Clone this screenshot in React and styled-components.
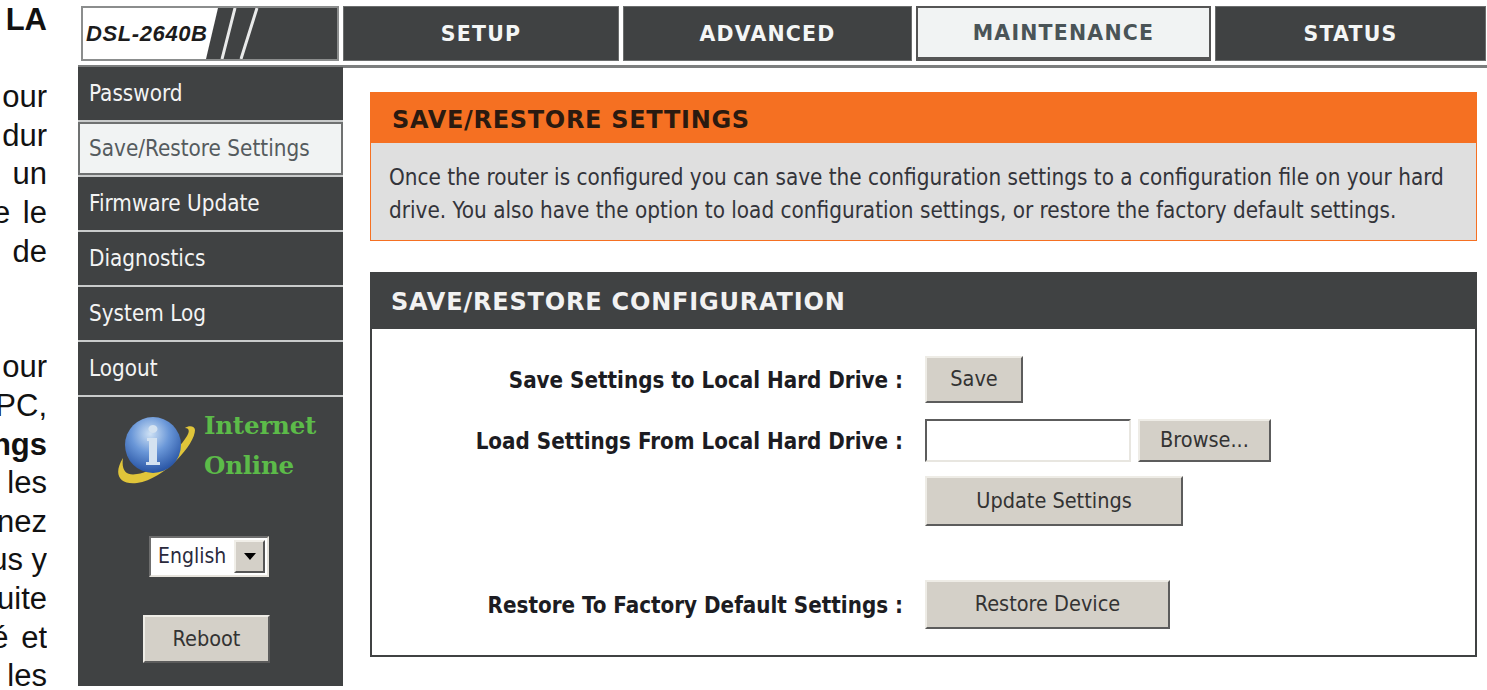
import React from "react";
import styled, { createGlobalStyle } from "styled-components";

const Global = createGlobalStyle`
  html, body { margin: 0; padding: 0; background: #fff; }
  #root { width: 1487px; height: 690px; overflow: hidden; }
`;
const UI = `"DejaVu Sans Condensed", "DejaVu Sans", sans-serif`;
const HEAD = `"DejaVu Sans", sans-serif`;

const Page = styled.div`
  display: flex; width: 1487px; height: 690px; background: #fff; overflow: hidden;
`;
const Manual = styled.div`
  flex: 0 0 47px; margin-right: 31px; overflow: hidden; padding-top: 1px;
  font: 31px/38.6px "Liberation Sans", Arial, sans-serif; color: #111;
`;
const ManualLine = styled.div`
  height: 38.6px; white-space: nowrap; display: flex; justify-content: flex-end;
  font-weight: ${p => (p.$bold ? 700 : 400)};
  word-spacing: ${p => p.$spread || 0}px;
`;
const Router = styled.div`
  flex: 1; display: flex; flex-direction: column; min-width: 0;
`;
const TopBar = styled.div`
  display: flex; gap: 4px; padding: 6px 0 0 3px; height: 55px; box-sizing: content-box;
  flex: none;
`;
const LogoCell = styled.div`
  flex: 0 0 258px; box-sizing: border-box; display: flex; overflow: hidden;
  background: #404243; border: 2px solid #8b8d8d;
`;
const LogoPlate = styled.div`
  flex: 0 0 135px; background: #fff; display: flex; align-items: center; padding-left: 3px;
  box-sizing: border-box; white-space: nowrap;
  clip-path: polygon(0 0, 100% 0, calc(100% - 12px) 100%, 0 100%);
  font: italic 700 22px "Liberation Sans", Arial, sans-serif; letter-spacing: 0.6px; color: #1c1c1c;
`;
const Tab = styled.div`
  flex: 0 0 ${p => p.$w}px; box-sizing: border-box; display: flex; align-items: center; justify-content: center;
  padding-top: 1px;
  font: 700 20.5px ${HEAD}; letter-spacing: 1.2px;
  background: ${p => (p.$active ? "#f1f3f3" : "#404243")};
  color: ${p => (p.$active ? "#4a5457" : "#f4f6f6")};
  border: 1px solid ${p => (p.$active ? "#555" : "#6b6d6d")};
  border-width: ${p => (p.$active ? "2px 2px 4px 2px" : "1px")};
`;
const TopRule = styled.div`
  height: 3px; margin-top: 4px; background: #7c7e7e; flex: none;
`;
const Body = styled.div`
  flex: 1; display: flex; min-height: 0;
`;
const Sidebar = styled.div`
  flex: 0 0 265px; display: flex; flex-direction: column; gap: 2px; height: 619px; margin-top: -1px;
  background: #c9cbcb;
`;
const MenuItem = styled.div`
  height: 53px; flex: none; box-sizing: border-box; display: flex; align-items: center;
  padding: 0 0 1px 11px; white-space: nowrap;
  font: 400 22.3px ${UI};
  background: ${p => (p.$active ? "#f1f3f3" : "#404243")};
  color: ${p => (p.$active ? "#555b5e" : "#f4f4f4")};
  border: ${p => (p.$active ? "2px solid #6f7171" : "none")};
  padding-left: ${p => (p.$active ? 9 : 11)}px;
`;
const SidePanel = styled.div`
  flex: 1; background: #404243; display: flex; flex-direction: column; align-items: stretch;
`;
const StatusRow = styled.div`
  display: flex; align-items: flex-start; padding: 9px 0 0 39px; height: 103px; box-sizing: content-box;
`;
const StatusText = styled.div`
  font: 700 24.5px/40px "DejaVu Serif", serif; color: #5cbb49; margin: 0 0 0 7px; letter-spacing: -0.2px;
`;
const LangSelect = styled.div`
  display: flex; align-self: flex-start; margin: 27px 0 0 71px; width: 120px; height: 41px; box-sizing: border-box;
  background: #fff; padding: 2px; border: 2px solid; border-color: #6e6e6e #e6e3dc #e6e3dc #6e6e6e;
  font: 400 21px ${UI}; color: #2a2a3c; align-items: center;
`;
const LangValue = styled.div`
  flex: 1; padding-left: 5px; margin-top: -2px;
`;
const LangArrow = styled.div`
  width: 31px; align-self: stretch; background: #d4d0c8; box-sizing: border-box;
  border: 2px solid; border-color: #f0eee8 #555 #555 #f0eee8;
  display: flex; align-items: center; justify-content: center;
  &::after { content: ""; border: 6px solid transparent; border-top: 7px solid #000; border-bottom: 0; }
`;
const Button = styled.button`
  display: block; box-sizing: border-box; padding: 0 0 2px; margin: 0;
  width: ${p => p.$w}px; height: ${p => p.$h}px;
  background: #d4d0c8; color: #333;
  font: 400 21.5px ${UI};
  border: 2px solid; border-color: #eeece6 #5c5c5c #5c5c5c #eeece6;
  margin-left: ${p => p.$ml || 0}px;
  margin-top: ${p => p.$mt || 0}px;
`;
const Main = styled.div`
  flex: 1; display: flex; flex-direction: column; gap: 31px; padding: 24px 10px 0 27px; min-width: 0;
`;
const InfoCard = styled.section`
  height: 149px; box-sizing: border-box; display: flex; flex-direction: column; background: #dfdfdf;
  border: 1px solid #f57022;
  border-top: 0;
`;
const InfoHead = styled.h2`
  margin: 0; height: 51px; flex: none; background: #f57022; color: #2a1a10; display: flex; align-items: center;
  padding: 4px 0 0 21px; box-sizing: border-box; white-space: nowrap;
  font: 700 24px ${HEAD}; letter-spacing: 0.7px;
`;
const InfoText = styled.p`
  margin: 0; padding: 18px 0 0 18px; font: 400 22.3px/33px ${UI}; color: #33343a; white-space: nowrap;
`;
const FormCard = styled.section`
  height: 385px; box-sizing: border-box; border: 2px solid #404243; border-top: 0; display: flex; flex-direction: column;
`;
const FormHead = styled.h2`
  margin: 0 -2px; height: 57px; flex: none; background: #404243; color: #f2f2f2; display: flex; align-items: center;
  padding: 2px 0 0 21px; box-sizing: border-box; white-space: nowrap;
  font: 700 24px ${HEAD}; letter-spacing: 0.8px;
`;
const Form = styled.div`
  display: flex; flex-direction: column; padding-top: 27px;
`;
const FormRow = styled.div`
  display: flex; align-items: center; margin-top: ${p => p.$mt || 0}px;
`;
const Label = styled.div`
  flex: 0 0 531px; margin-right: 22px; text-align: right; white-space: nowrap;
  font: 700 22.2px ${UI}; color: #1c1c22;
`;
const FileInput = styled.input`
  width: 206px; height: 43px; box-sizing: border-box; background: #fff; margin: 0 7px 0 0; padding: 0;
  border: 2px solid; border-color: #5c5c5c #e8e6e0 #e8e6e0 #5c5c5c; outline: 0;
`;
const GlobeIcon = styled.svg`
  flex: none; margin-top: 10px;
`;
const SlashIcon = styled.svg`
  flex: none;
`;

const Globe = () => (
  <GlobeIcon width="80" height="70" viewBox="0 0 80 70">
    <defs>
      <radialGradient id="ball" cx="0.45" cy="0.3" r="0.75">
        <stop offset="0" stopColor="#cfe2f5" />
        <stop offset="0.45" stopColor="#6a97d8" />
        <stop offset="1" stopColor="#1e4a9c" />
      </radialGradient>
    </defs>
    <path d="M6 42 C-4 58 2 69 20 67 C48 63 78 28 78 14 C78 10 72 9 68 12 C72 12 73 15 70 20 C60 36 38 56 20 58 C10 60 4 55 6 42Z" fill="#e0c53a" />
    <circle cx="36" cy="29" r="28" fill="url(#ball)" />
    <path d="M36 9 a4.5 4 0 1 1 -0.1 0Z M30 22 h10 v24 h3 v3 h-14 v-3 h3 v-21 h-2Z" fill="#d4e2f0" />
  </GlobeIcon>
);
const Slashes = () => (
  <SlashIcon width="60" height="51" viewBox="0 0 60 51">
    <path d="M17 0 L4 51 M39 0 L23 51" stroke="#e9eaea" strokeWidth="3" fill="none" />
  </SlashIcon>
);

const manual = [
  ["LA", true], [""], ["our"], ["dur"], ["un"], ["e le", false, 4], ["de"], [""], [""],
  ["our"], ["PC,"], ["ngs", true], ["les"], ["nez"], ["us y"], ["uite"], ["é et", false, 4], ["les"],
];

export default function App() {
  return (
    <Page>
      <Global />
      <Manual>
        {manual.map(([t, b, s], i) => (
          <ManualLine key={i} $bold={b} $spread={s}>{t}</ManualLine>
        ))}
      </Manual>
      <Router>
        <TopBar>
          <LogoCell>
            <LogoPlate>DSL-2640B</LogoPlate>
            <Slashes />
          </LogoCell>
          <Tab $w={276}>SETUP</Tab>
          <Tab $w={289}>ADVANCED</Tab>
          <Tab $w={295} $active>MAINTENANCE</Tab>
          <Tab $w={271}>STATUS</Tab>
        </TopBar>
        <TopRule />
        <Body>
          <Sidebar>
            <MenuItem>Password</MenuItem>
            <MenuItem $active>Save/Restore Settings</MenuItem>
            <MenuItem>Firmware Update</MenuItem>
            <MenuItem>Diagnostics</MenuItem>
            <MenuItem>System Log</MenuItem>
            <MenuItem>Logout</MenuItem>
            <SidePanel>
              <StatusRow>
                <Globe />
                <StatusText>Internet<br />Online</StatusText>
              </StatusRow>
              <LangSelect>
                <LangValue>English</LangValue>
                <LangArrow />
              </LangSelect>
              <Button $w={127} $h={48} $ml={65} $mt={38}>Reboot</Button>
            </SidePanel>
          </Sidebar>
          <Main>
            <InfoCard>
              <InfoHead>SAVE/RESTORE SETTINGS</InfoHead>
              <InfoText>
                Once the router is configured you can save the configuration settings to a configuration file on your hard<br />
                drive. You also have the option to load configuration settings, or restore the factory default settings.
              </InfoText>
            </InfoCard>
            <FormCard>
              <FormHead>SAVE/RESTORE CONFIGURATION</FormHead>
              <Form>
                <FormRow>
                  <Label>Save Settings to Local Hard Drive :</Label>
                  <Button $w={98} $h={47}>Save</Button>
                </FormRow>
                <FormRow $mt={16}>
                  <Label>Load Settings From Local Hard Drive :</Label>
                  <FileInput readOnly />
                  <Button $w={133} $h={43}>Browse...</Button>
                </FormRow>
                <FormRow $mt={14}>
                  <Label />
                  <Button $w={258} $h={50}>Update Settings</Button>
                </FormRow>
                <FormRow $mt={54}>
                  <Label>Restore To Factory Default Settings :</Label>
                  <Button $w={245} $h={49}>Restore Device</Button>
                </FormRow>
              </Form>
            </FormCard>
          </Main>
        </Body>
      </Router>
    </Page>
  );
}
